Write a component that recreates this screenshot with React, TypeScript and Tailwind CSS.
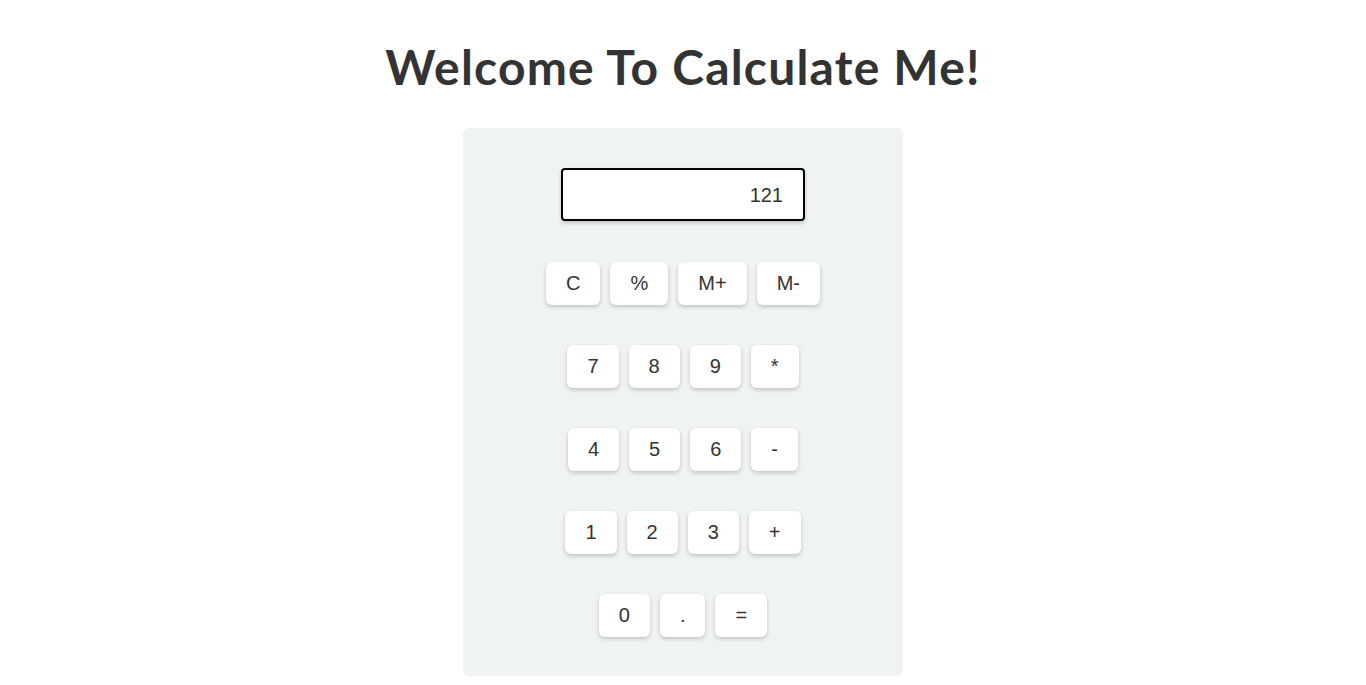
import React from "react";

const rows: string[][] = [
  ["C", "%", "M+", "M-"],
  ["7", "8", "9", "*"],
  ["4", "5", "6", "-"],
  ["1", "2", "3", "+"],
  ["0", ".", "="],
];

export default function App() {
  return (
    <div className="min-h-[685px] bg-white font-['Liberation_Sans',Arial,sans-serif]">
      <h1 className="pt-[38px] text-center font-['Lato',sans-serif] text-[48px] font-bold leading-[58px] tracking-[1.2px] text-[#333333]">
        Welcome To Calculate Me!
      </h1>
      <div className="mx-auto mt-[32px] flex h-[548px] w-[440px] flex-col items-center rounded-[6px] bg-[#f0f3f3] pt-[40px]">
        <div className="box-border flex h-[53px] w-[244px] items-center justify-end rounded-[4px] border-2 border-black bg-white pr-[20px] text-[20px] text-[#333333] shadow-[0_2px_4px_rgba(0,0,0,0.2)]">
          121
        </div>
        <div className="mt-[41px] flex flex-col gap-[40px]">
          {rows.map((row, i) => (
            <div key={i} className="flex justify-center gap-[10px]">
              {row.map((k) => (
                <button
                  key={k}
                  className="rounded-[6px] bg-white px-[20px] py-[10px] text-[20px] leading-[23px] text-[#333333] shadow-[0_2px_4px_rgba(0,0,0,0.2)]"
                >
                  {k}
                </button>
              ))}
            </div>
          ))}
        </div>
      </div>
    </div>
  );
}
